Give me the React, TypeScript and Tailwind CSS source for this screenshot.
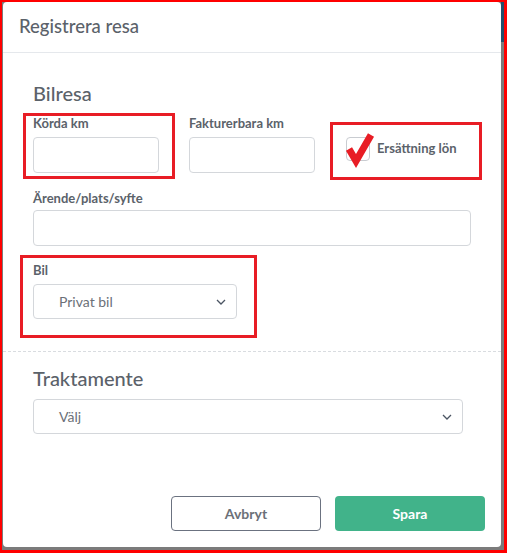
import React from 'react';

function Chevron() {
  return (
    <svg width="10" height="6" viewBox="0 0 10 6" fill="none" className="shrink-0">
      <path d="M1 1l4 4 4-4" stroke="#4b5563" strokeWidth="1.3" />
    </svg>
  );
}

function Mark({ className }: { className: string }) {
  return <div className={`absolute border-[3px] border-[#e81d25] ${className}`} />;
}

export default function App() {
  return (
    <div className="w-[507px] h-[553px] border-l-2 border-t-2 border-r-[3px] border-b-[3px] border-[#ff0000] bg-[#7b7b7b] flex font-['Lato',sans-serif] text-[#5b626a]">
      <div className="relative ml-px mb-[3px] w-[498px] bg-white rounded-[4px] flex flex-col">
        <div className="h-[51px] border-b border-[#e5e8ec] flex items-center pl-4">
          <h2 className="text-[18.5px] font-medium">Registrera resa</h2>
        </div>

        <div className="px-[30px]">
          <h3 className="mt-[28px] text-[20px] leading-6 font-medium">Bilresa</h3>

          <div className="mt-[10px] flex">
            <div className="w-[126px]">
              <label className="block text-[13px] leading-4 font-bold">Körda km</label>
              <input className="mt-[6px] w-[126px] h-9 border border-[#d4d7db] rounded-[4px]" />
            </div>
            <div className="ml-[30px] w-[126px]">
              <label className="block text-[13px] leading-4 font-bold">Fakturerbara km</label>
              <input className="mt-[6px] w-[126px] h-9 border border-[#d4d7db] rounded-[4px]" />
            </div>
            <div className="ml-[31px] mt-[22px] flex items-center gap-[7px] h-6">
              <span className="w-6 h-6 border border-[#c9ccd1] rounded-[4px]" />
              <span className="text-[13px] font-bold">Ersättning lön</span>
            </div>
          </div>

          <label className="mt-[17px] block text-[13px] leading-4 font-bold">Ärende/plats/syfte</label>
          <input className="mt-1 w-[438px] h-9 border border-[#d4d7db] rounded-[4px]" />

          <label className="mt-4 block text-[13px] leading-4 font-bold">Bil</label>
          <div className="mt-[6px] w-[204px] h-[35px] border border-[#d4d7db] rounded-[4px] flex items-center justify-between pl-[25px] pr-[10px]">
            <span className="text-[14px] text-[#6b7078]">Privat bil</span>
            <Chevron />
          </div>
        </div>

        <div className="mt-8 border-t border-dashed border-[#d9dce0]" />

        <div className="px-[30px]">
          <h3 className="mt-[14px] text-[20px] leading-6 font-medium">Traktamente</h3>
          <div className="mt-[9px] w-[430px] h-[35px] border border-[#d4d7db] rounded-[4px] flex items-center justify-between pl-[25px] pr-[10px]">
            <span className="text-[14px] text-[#6b7078]">Välj</span>
            <Chevron />
          </div>
        </div>

        <div className="mt-auto mb-4 pr-4 flex justify-end gap-[14px]">
          <button className="w-[150px] h-[35px] border border-[#6b7280] rounded-[4px] text-[14px] font-bold text-[#6b7078]">Avbryt</button>
          <button className="w-[150px] h-[35px] bg-[#41b38a] rounded-[4px] text-[14px] font-bold text-white">Spara</button>
        </div>

        <Mark className="left-[20px] top-[111px] w-[152px] h-[66px]" />
        <Mark className="left-[327px] top-[120px] w-[152px] h-[58px]" />
        <Mark className="left-[17px] top-[253px] w-[237px] h-[83px]" />
        <svg className="absolute left-[338px] top-[126px]" width="36" height="40" viewBox="0 0 36 40">
          <polyline points="8,21 15,33 30,7" fill="none" stroke="#e81d25" strokeWidth="7" strokeLinejoin="miter" />
        </svg>
      </div>
      <div className="flex-1 flex flex-col">
        <div className="h-10 bg-[#23506b]" />
      </div>
    </div>
  );
}
